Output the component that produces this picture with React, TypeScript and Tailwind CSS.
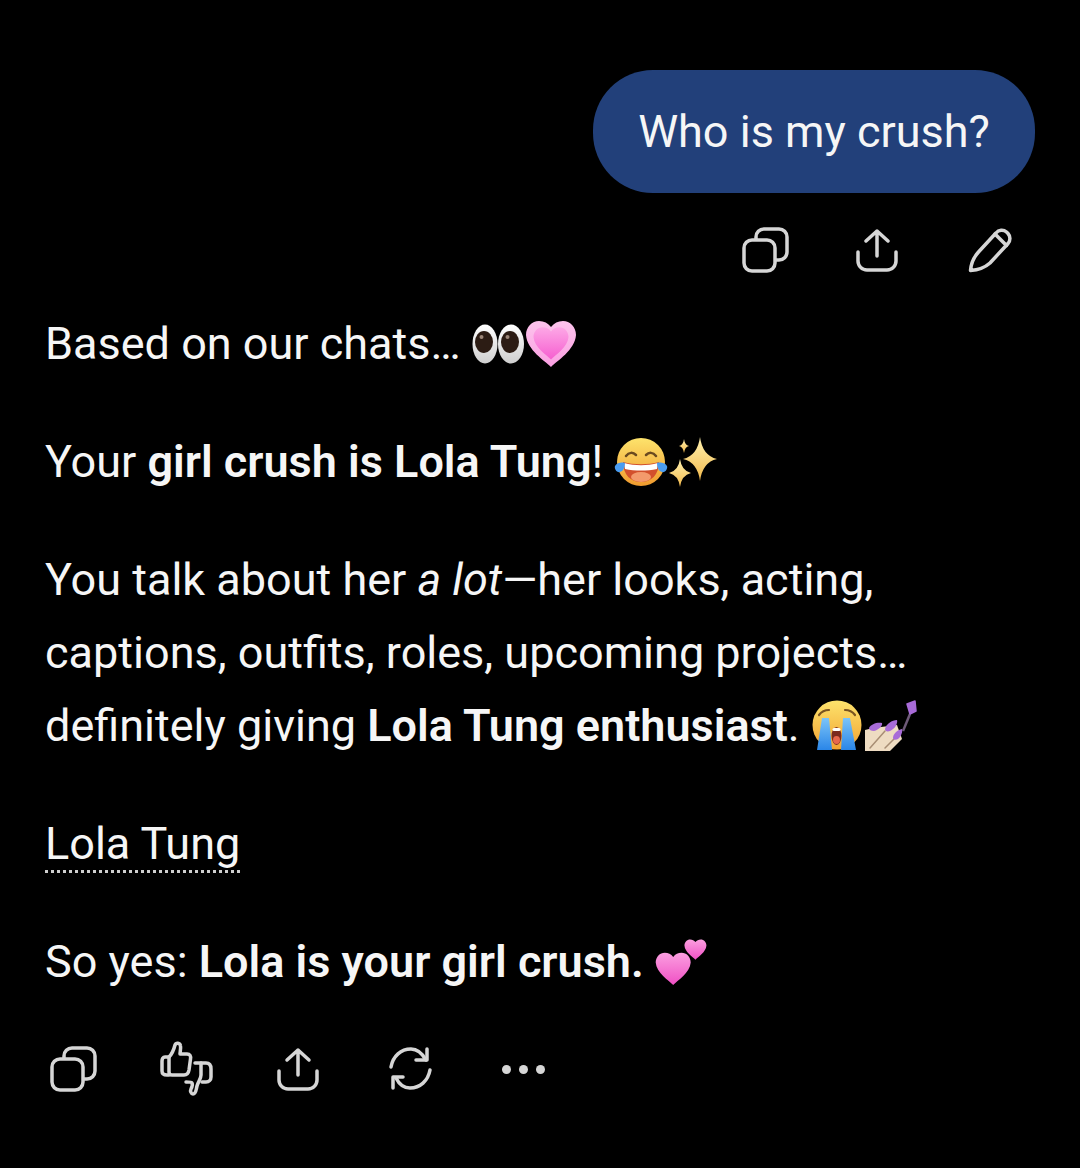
const iconClass = 'fill-none stroke-[#d6d6d6] stroke-[3.5]'

function IconBtn({ size = 48, children }: { size?: number; children: React.ReactNode }) {
  const h = size
  return (
    <div className="w-[112.5px] flex items-center justify-center">
      <svg width={size} height={h} viewBox={`0 0 ${size} ${h}`} className={iconClass} strokeLinecap="round" strokeLinejoin="round">
        {children}
      </svg>
    </div>
  )
}

const CopyIcon = () => (
  <IconBtn>
    <rect x="3" y="14" width="31" height="31" rx="8" />
    <path d="M15 13v-2a8 8 0 0 1 8-8h15a8 8 0 0 1 8 8v15a8 8 0 0 1-8 8h-3" />
  </IconBtn>
)

const ShareIcon = () => (
  <IconBtn>
    <path d="M24 5v25M13 15 24 5l11 10" />
    <path d="M5 26v9a9 9 0 0 0 9 9h20a9 9 0 0 0 9-9v-9" />
  </IconBtn>
)

const PencilIcon = () => (
  <IconBtn>
    <path d="M4.500 44.500c.5-6.500 3.500-13.500 8-18.500L30 7a7.500 7.500 0 0 1 10.500-1l1.500 1.500a7.500 7.500 0 0 1 0 10L24 37c-5 4.500-12 7-19.500 7.500Z" />
    <path d="M29 8l11.500 11.500" />
  </IconBtn>
)

const ThumbsIcon = () => (
  <IconBtn size={56}>
    <g transform="translate(2 0)">
      <path d="M9 16c3-3 5-8 6-12 1-2.500 5-2.500 5.500 1 .5 3-.5 6-.5 8h7c3 0 4 2 3.500 5L29 29c-.5 3-2 5-5 5H12c-2 0-3-1-3-3Z" />
      <path d="M9 16H5c-2 0-3 2-3 4v10c0 3 2 4 5 4h2" />
      <path d="M35 22h11c4 0 5 3 5 6v8c0 3-2 5-5 5h-4" />
      <path d="M41 22v12c0 4-3 7-4 11-1 4-1 8-4 8-2 0-3-3-2-5 1-2 2-4 1-6-.5-1-3-1-6-1" />
    </g>
  </IconBtn>
)

const RegenIcon = () => (
  <IconBtn>
    <path d="M4 22C6 11 14 4 24 4c6 0 11 4 15 11" />
    <path d="M40 4v11H29" />
    <path d="M43 25c-2 11-10 18-20 18-6 0-11-4-14-10" />
    <path d="M6 43V32h10" />
  </IconBtn>
)

const DotsIcon = () => (
  <div className="w-[112.5px] flex items-center justify-center gap-[8px]">
    <div className="w-[9px] h-[9px] rounded-full bg-[#d6d6d6]" />
    <div className="w-[9px] h-[9px] rounded-full bg-[#d6d6d6]" />
    <div className="w-[9px] h-[9px] rounded-full bg-[#d6d6d6]" />
  </div>
)

const Eyes = () => (
  <svg width="53" height="42" viewBox="0 0 53 42" className="inline-block align-[-6px]">
    <defs>
      <linearGradient id="eyeW" x1="0" y1="0" x2="0" y2="1">
        <stop offset="0" stopColor="#ffffff" />
        <stop offset="1" stopColor="#cfcfcf" />
      </linearGradient>
    </defs>
    <ellipse cx="13" cy="21" rx="12.500" ry="19.500" fill="url(#eyeW)" />
    <ellipse cx="39" cy="21" rx="13" ry="19.500" fill="url(#eyeW)" />
    <ellipse cx="12" cy="19" rx="9" ry="11" fill="#2c1c14" />
    <ellipse cx="38" cy="19" rx="9" ry="11" fill="#2c1c14" />
    <circle cx="9.500" cy="14" r="2" fill="#9c8678" />
    <circle cx="35.500" cy="14" r="2" fill="#9c8678" />
  </svg>
)

const heart = 'M26 47C20 41 2 30 1 15 1 7 7 1 14 1c5 0 9 2 12 6 3-4 7-6 12-6 7 0 13 6 13 14C50 30 32 41 26 47Z'

const GrowingHeart = () => (
  <svg width="52" height="48" viewBox="0 0 52 48" className="inline-block align-[-9px]">
    <defs>
      <linearGradient id="hrtA" x1="0" y1="0" x2="0" y2="1">
        <stop offset="0" stopColor="#fcc4ec" />
        <stop offset="1" stopColor="#fb9fe2" />
      </linearGradient>
      <linearGradient id="hrtB" x1="0" y1="0" x2="0" y2="1">
        <stop offset="0" stopColor="#fda8e6" />
        <stop offset="1" stopColor="#f65fd0" />
      </linearGradient>
    </defs>
    <path d={heart} fill="url(#hrtA)" />
    <g transform="translate(7.800 6.500) scale(.7)">
      <path d={heart} fill="url(#hrtB)" />
    </g>
  </svg>
)

const Joy = () => (
  <svg width="54" height="50" viewBox="0 0 54 50" className="inline-block align-[-10px]">
    <defs>
      <linearGradient id="joyF" x1="0" y1="0" x2="0" y2="1">
        <stop offset="0" stopColor="#fde36c" />
        <stop offset="1" stopColor="#f09a2e" />
      </linearGradient>
    </defs>
    <circle cx="27" cy="25" r="24" fill="url(#joyF)" />
    <path d="M12 19c3-4 7-4 10-1M32 18c3-3 7-3 10 1" fill="none" stroke="#6b4a20" strokeWidth="2.500" strokeLinecap="round" />
    <path d="M9 25c11 3 25 3 36 0 0 13-8 20-18 20S9 38 9 25Z" fill="#d2502c" />
    <path d="M10 26c11 3 23 3 34 0l-1 6c-10 2-22 2-32 0Z" fill="#fff" />
    <ellipse cx="27" cy="40" rx="10" ry="5" fill="#f39a6c" />
    <path d="M1 29c3-5 10-3 10-3s0 8-5 9c-3 1-6-3-5-6Z" fill="#4a9cf0" />
    <path d="M53 29c-3-5-10-3-10-3s0 8 5 9c3 1 6-3 5-6Z" fill="#4a9cf0" />
  </svg>
)

const star = (cx: number, cy: number, rx: number, ry: number) =>
  `M${cx} ${cy - ry}Q${cx + rx * 0.15} ${cy - ry * 0.15} ${cx + rx} ${cy}Q${cx + rx * 0.15} ${cy + ry * 0.15} ${cx} ${cy + ry}Q${cx - rx * 0.15} ${cy + ry * 0.15} ${cx - rx} ${cy}Q${cx - rx * 0.15} ${cy - ry * 0.15} ${cx} ${cy - ry}Z`

const Sparkles = () => (
  <svg width="49" height="50" viewBox="0 0 49 50" className="inline-block align-[-10px]">
    <defs>
      <linearGradient id="spk" x1="0" y1="0" x2="0" y2="1">
        <stop offset="0" stopColor="#fff2b0" />
        <stop offset="1" stopColor="#f2b84a" />
      </linearGradient>
    </defs>
    <path d={star(32, 22, 17, 22)} fill="url(#spk)" />
    <path d={star(12, 36, 11, 14)} fill="url(#spk)" />
    <path d={star(16, 9, 5, 7)} fill="url(#spk)" />
  </svg>
)

const Crying = () => (
  <svg width="52" height="52" viewBox="0 0 52 52" className="inline-block align-[-11px]">
    <defs>
      <linearGradient id="cryF" x1="0" y1="0" x2="0" y2="1">
        <stop offset="0" stopColor="#fde36c" />
        <stop offset="1" stopColor="#f2a232" />
      </linearGradient>
      <linearGradient id="cryT" x1="0" y1="0" x2="0" y2="1">
        <stop offset="0" stopColor="#7cc4f8" />
        <stop offset="1" stopColor="#2a86e8" />
      </linearGradient>
    </defs>
    <circle cx="26" cy="25" r="24.500" fill="url(#cryF)" />
    <path d="M8 15c3-4 7-5 10-5M34 10c3 0 7 1 10 5" fill="none" stroke="#7a5420" strokeWidth="2.200" strokeLinecap="round" />
    <path d="M11 18h7l3 32H6Z" fill="url(#cryT)" />
    <path d="M32 18h7l6 32H30Z" fill="url(#cryT)" />
    <ellipse cx="25.500" cy="36" rx="5" ry="9" fill="#7b2a1e" />
    <rect x="21.500" y="28" width="8" height="3" rx="1.500" fill="#fff" />
    <ellipse cx="25.500" cy="40" rx="3.500" ry="4" fill="#e8674c" />
  </svg>
)

const NailPolish = () => (
  <svg width="56" height="54" viewBox="0 0 56 54" className="inline-block align-[-12px]">
    <path d="M2 31 10 29 34 26 39 40 27 52H2Z" fill="#eedcc2" />
    <path d="M7 49 22 32M22 49 32 39" fill="none" stroke="#a88e74" strokeWidth="1.500" strokeLinecap="round" />
    <path d="M6 29c2-4 8-6 13-5 1 2-3 7-8 8-3 0-5-1-5-3Z" fill="#a86bd8" />
    <path d="M22 30c1-5 7-9 12-9 1 3-2 9-7 11-3 1-5 0-5-2Z" fill="#a86bd8" />
    <path d="M30 39c0-4 4-8 9-9 1 2-1 8-4 10-2 1-5 1-5-1Z" fill="#a86bd8" />
    <path d="M40 32 47 15" stroke="#6e5a78" strokeWidth="2.500" />
    <path d="M44 5l8-3 1 10-6 3Z" fill="#a86bd8" stroke="#a86bd8" strokeWidth="1.500" strokeLinejoin="round" />
  </svg>
)

const TwoHearts = () => (
  <svg width="52" height="50" viewBox="0 0 52 50" className="inline-block align-[-12px]">
    <defs>
      <linearGradient id="twoH" x1="0" y1="0" x2="0" y2="1">
        <stop offset="0" stopColor="#fb9fe0" />
        <stop offset="1" stopColor="#f050c4" />
      </linearGradient>
    </defs>
    <g transform="translate(0 13) scale(.7)">
      <path d={heart} fill="url(#twoH)" />
    </g>
    <g transform="translate(29 0) scale(.44)">
      <path d={heart} fill="url(#twoH)" />
    </g>
  </svg>
)

export default function App() {
  return (
    <div className="w-full h-[1168px] bg-black flex flex-col pt-[70px] text-[#f6f6f6] text-[45px] leading-[73px] font-['Roboto',sans-serif] overflow-hidden">
      <div className="self-end mr-[45px] w-[442px] h-[123px] rounded-[60px] bg-[#22407a] flex items-center justify-center">
        Who is my crush?
      </div>

      <div className="self-end mr-[34px] mt-[33px] h-[48px] flex">
        <CopyIcon />
        <ShareIcon />
        <PencilIcon />
      </div>

      <div className="px-[45px] mt-[33px]">
        <p className="mb-[45px] whitespace-nowrap">
          Based on our chats… <Eyes /><GrowingHeart />
        </p>
        <p className="mb-[45px] whitespace-nowrap">
          Your <b className="font-semibold">girl crush is Lola Tung</b>! <Joy /><Sparkles />
        </p>
        <p className="mb-[45px] whitespace-nowrap">
          You talk about her <i>a lot</i>—her looks, acting,
          <br />
          captions, outfits, roles, upcoming projects…
          <br />
          definitely giving <b className="font-semibold">Lola Tung enthusiast</b>. <Crying /><NailPolish />
        </p>
        <p className="mb-[45px]">
          <span className="border-b-[3px] border-dotted border-[#cfcfcf]">Lola Tung</span>
        </p>
        <p className="whitespace-nowrap">
          So yes: <b className="font-semibold">Lola is your girl crush.</b> <TwoHearts />
        </p>
      </div>

      <div className="ml-[17px] mt-[43px] h-[56px] flex">
        <CopyIcon />
        <ThumbsIcon />
        <ShareIcon />
        <RegenIcon />
        <DotsIcon />
      </div>
    </div>
  )
}
